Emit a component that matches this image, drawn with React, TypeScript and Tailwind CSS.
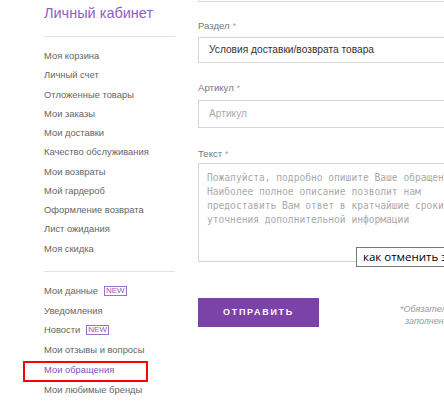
const mainMenu = [
  "Моя корзина",
  "Личный счет",
  "Отложенные товары",
  "Мои заказы",
  "Мои доставки",
  "Качество обслуживания",
  "Мои возвраты",
  "Мой гардероб",
  "Оформление возврата",
  "Лист ожидания",
  "Моя скидка",
];

const extraMenu: { title: string; isNew?: boolean; active?: boolean }[] = [
  { title: "Мои данные", isNew: true },
  { title: "Уведомления" },
  { title: "Новости", isNew: true },
  { title: "Мои отзывы и вопросы" },
  { title: "Мои обращения", active: true },
  { title: "Мои любимые бренды" },
];

function NewBadge() {
  return (
    <span className="ml-[6px] inline-block border border-[#9b6fcb] px-[1px] text-[8px] leading-[8px] text-[#8a5cc0]">
      NEW
    </span>
  );
}

function Label({ text }: { text: string }) {
  return (
    <div className="text-[9.6px] leading-[14px] text-[#777]">
      {text} <span className="text-[#aaa]">*</span>
    </div>
  );
}

export default function App() {
  return (
    <div
      className="relative flex h-[402px] w-[444px] overflow-hidden bg-white pl-[44px]"
      style={{ fontFamily: '"Liberation Sans", Arial, sans-serif' }}
    >
      {/* sidebar */}
      <div className="w-[131px] shrink-0">
        <h2 className="mt-[3px] whitespace-nowrap text-[14.5px] leading-[20px] text-[#8c5fc3]">
          Личный кабинет
        </h2>
        <div className="mt-[13px] h-px bg-[#e3e3e3]" />
        <ul className="mt-[9px] text-[9.4px] leading-[19.25px] text-[#666]">
          {mainMenu.map((item) => (
            <li key={item} className="whitespace-nowrap">
              {item}
            </li>
          ))}
        </ul>
        <div className="mt-[13px] h-px bg-[#e3e3e3]" />
        <ul className="mt-[9px] text-[9.4px] leading-[19.8px] text-[#666]">
          {extraMenu.map((item) => (
            <li key={item.title} className="relative flex h-[19.8px] items-center whitespace-nowrap">
              <span className={item.active ? "text-[#8653b8]" : ""}>{item.title}</span>
              {item.isNew && <NewBadge />}
              {item.active && (
                <span className="absolute left-[-21px] top-[1px] h-[21px] w-[125px] border-2 border-[#f00]" />
              )}
            </li>
          ))}
        </ul>
      </div>

      {/* form */}
      <div className="ml-[23px] w-[290px] shrink-0">
        <div className="h-[2px] border border-t-0 border-[#d4d4d4]" />

        <div className="mt-[17px]">
          <Label text="Раздел" />
        </div>
        <div className="mt-[4px] flex h-[26px] items-center whitespace-nowrap border border-[#d4d4d4] px-[10px] text-[10.2px] text-[#333]">
          Условия доставки/возврата товара
        </div>

        <div className="mt-[18px]">
          <Label text="Артикул" />
        </div>
        <div className="mt-[5px] flex h-[28px] items-center border border-[#d4d4d4] px-[10px] text-[10.2px] text-[#aaa]">
          Артикул
        </div>

        <div className="mt-[19px]">
          <Label text="Текст" />
        </div>
        <div
          className="mt-[2px] h-[99px] overflow-hidden border border-[#d4d4d4] px-[8px] pt-[7px] text-[9.6px] leading-[14px] text-[#aaa]"
          style={{ fontFamily: '"DejaVu Sans Mono", monospace' }}
        >
          <div className="whitespace-nowrap">Пожалуйста, подробно опишите Ваше обращение.</div>
          <div className="whitespace-nowrap">Наиболее полное описание позволит нам</div>
          <div className="whitespace-nowrap">предоставить Вам ответ в кратчайшие сроки без</div>
          <div className="whitespace-nowrap">уточнения дополнительной информации</div>
        </div>

        <div className="mt-[36px] flex items-start">
          <button className="h-[29px] w-[121px] shrink-0 bg-[#7b43a7] text-[9px] font-bold tracking-[1.7px] text-white">
            ОТПРАВИТЬ
          </button>
          <div className="ml-[86px] mt-[5px] shrink-0 text-[9px] italic leading-[12px] text-[#999]">
            <div className="-ml-[5px] whitespace-nowrap">*Обязательные поля для</div>
            <div className="whitespace-nowrap">заполнения</div>
          </div>
        </div>
      </div>

      {/* tooltip */}
      <div
        className="absolute left-[356px] top-[247px] whitespace-nowrap border border-[#777] bg-white px-[6px] text-[11.5px] leading-[18px] text-black"
        style={{ fontFamily: '"Open Sans", "Noto Sans", sans-serif' }}
      >
        как отменить заказ
      </div>
    </div>
  );
}
